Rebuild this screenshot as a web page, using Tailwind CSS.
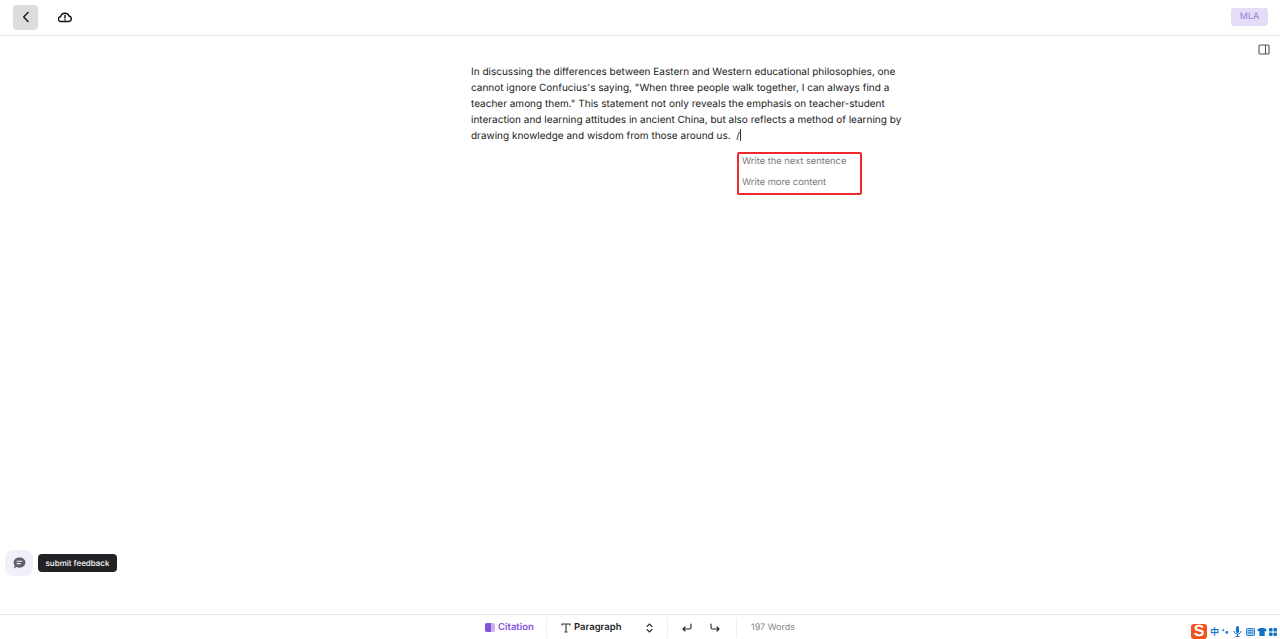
<!DOCTYPE html>
<html lang="en">

<head>
    <meta charset="UTF-8">
    <meta name="viewport" content="width=device-width, initial-scale=1.0">
    <title>Editor</title>
    <script src="https://cdn.jsdelivr.net/npm/@tailwindcss/browser@4"></script>
</head>

<body class="bg-white h-[639px] overflow-hidden font-['Inter',sans-serif] [text-rendering:geometricPrecision]">
    <div class="relative flex flex-col h-[639px]">

        <!-- Header -->
        <header class="h-[36px] shrink-0 border-b border-[#e5e5e5] flex items-center justify-between pl-[13px] pr-[12px] pb-[1px]">
            <div class="flex items-center gap-[20px]">
                <button class="w-[25px] h-[25px] rounded bg-[#dcdcdc] flex items-center justify-center">
                    <svg width="14" height="14" viewBox="0 0 14 14" fill="none" stroke="#222" stroke-width="1.6" stroke-linecap="round" stroke-linejoin="round"><path d="M9 2.500 4.700 7 9 11.500"/></svg>
                </button>
                <svg width="14" height="12" viewBox="0 0 14 12" fill="none" stroke="#111" stroke-width="1.400" stroke-linejoin="round" stroke-linecap="round"><path d="M3.600 10.500H3A2.400 2.400 0 0 1 2.600 5.700 4.400 4.400 0 0 1 11 5 2.800 2.800 0 0 1 11 10.500Z"/><path d="M7 4.200V7M7 8.800v.2"/></svg>
            </div>
            <span class="w-[37px] h-[18px] rounded-[3px] bg-[#e6dcf8] text-[#9a78dc] text-[9px] flex items-center justify-center">MLA</span>
        </header>

        <!-- Document -->
        <main class="relative flex-1 flex flex-col">
            <div class="flex justify-end pr-[10px] pt-[8px] h-[28px]">
                <svg width="12" height="11" viewBox="0 0 12 11" fill="none" stroke="#555" stroke-width="1.100"><rect x="1" y="1" width="10" height="9" rx="1"/><path d="M7.500 1v9"/></svg>
            </div>
            <div class="w-[436px] ml-[471px] mt-0 text-[10px] leading-[16.100px] text-[#1a1a1a]">
                <p>In discussing the differences between Eastern and Western educational philosophies, one cannot ignore Confucius's saying, "When three people walk together, I can always find a teacher among them." This statement not only reveals the emphasis on teacher-student interaction and learning attitudes in ancient China, but also reflects a method of learning by drawing knowledge and wisdom from those around us. &nbsp;/<span class="inline-block w-px h-[12px] bg-[#333] align-[-2px]"></span></p>
            </div>

            <!-- Slash menu -->
            <div class="absolute left-[737px] top-[116px] w-[125px] h-[43px] border-2 border-[#f02a2a] rounded-[2px] flex flex-col gap-[6px] pl-[3px] text-[9.300px] text-[#77777c]">
                <span class="leading-[15px]">Write the next sentence</span>
                <span class="leading-[15px]">Write more content</span>
            </div>

            <!-- Feedback -->
            <div class="absolute left-[5px] top-[514px] flex items-center gap-[5px]">
                <div class="w-[28px] h-[26px] rounded-lg bg-[#eff0fa] flex items-center justify-center">
                    <svg width="13" height="12" viewBox="0 0 13 12"><path fill="#5f6066" d="M6.500.5C3.200.5.600 2.700.600 5.500c0 1.100.4 2.100 1 2.900L1 11.200l2.600-1.100c.9.4 1.900.6 2.900.6 3.300 0 5.900-2.300 5.900-5.200S9.800.5 6.500.5Z"/><path stroke="#eff0fa" stroke-width="1.100" stroke-linecap="round" d="M4 4.300h5M4 6.600h3.300"/></svg>
                </div>
                <div class="h-[18px] w-[79px] justify-center rounded-[4px] bg-[#222226] text-white text-[8px] font-medium flex items-center">submit feedback</div>
            </div>
        </main>

        <!-- Footer toolbar -->
        <footer class="h-[25px] shrink-0 border-t border-[#e5e5e5] flex items-center pl-[485px] pt-[1px] text-[9.500px]">
            <div class="flex items-center gap-[3px] w-[61px] text-[#8352de] font-semibold">
                <svg width="10" height="9" viewBox="0 0 10 9"><rect width="10" height="9" rx="2" fill="#c9b2f2"/><path d="M0 2A2 2 0 0 1 2 0H6v9H2A2 2 0 0 1 0 7Z" fill="#8352de"/></svg>
                <span class="pt-[1px]">Citation</span>
            </div>
            <div class="w-px h-[20px] bg-[#eeeeee]"></div>
            <div class="flex items-center w-[120px] pl-[14px] text-[#1c1c1c] font-semibold">
                <svg width="10" height="10" viewBox="0 0 10 10" fill="none" stroke="#333" stroke-width="1.100"><path d="M1 2.400V1h8v1.400M5 1v8M3.500 9h3"/></svg>
                <span class="ml-[3px] w-[72px] pt-[1px]">Paragraph</span>
                <svg width="7" height="10" viewBox="0 0 7 10" fill="none" stroke="#333" stroke-width="1.100" stroke-linecap="round" stroke-linejoin="round"><path d="M1 3.500 3.500 1 6 3.500M1 6.500 3.500 9 6 6.500"/></svg>
            </div>
            <div class="w-px h-[20px] bg-[#eeeeee]"></div>
            <div class="flex items-center gap-[18px] pl-[14px] w-[68px]">
                <svg width="10" height="9" viewBox="0 0 10 9" fill="none" stroke="#222" stroke-width="1.100" stroke-linecap="round" stroke-linejoin="round"><path d="M9 1v3.500a1.500 1.500 0 0 1-1.500 1.500H1M3 4 1 6l2 2"/></svg>
                <svg width="10" height="9" viewBox="0 0 10 9" fill="none" stroke="#222" stroke-width="1.100" stroke-linecap="round" stroke-linejoin="round"><path d="M1 1v3.500A1.500 1.500 0 0 0 2.500 6H9M7 4l2 2-2 2"/></svg>
            </div>
            <div class="w-px h-[20px] bg-[#eeeeee]"></div>
            <span class="ml-[14px] text-[9px] text-[#85858a]">197 Words</span>
        </footer>

        <!-- IME bar -->
        <div class="absolute left-[1191px] top-[624px] flex items-center gap-0 bg-white h-[15px]">
            <div class="w-[16px] h-[15px] rounded-[3px] bg-[#f1531f] text-white text-[16px] font-bold leading-[15px] text-center font-['Liberation_Sans',sans-serif]">S</div>
            <span class="w-[11px] ml-[2px] text-[9px] font-bold text-[#1272c8] text-center font-['Noto_Sans_CJK_SC',sans-serif]">中</span>
            <svg class="ml-[2px]" width="7" height="7" viewBox="0 0 8 7"><circle cx="1.500" cy="2" r="1.200" fill="#1272c8"/><circle cx="5.500" cy="4.500" r="1.500" fill="#1272c8"/></svg>
            <svg class="ml-[4px]" width="9" height="11" viewBox="0 0 9 11" fill="none"><rect x="3" y="0" width="3" height="7" rx="1.500" fill="#1272c8"/><path d="M1 5c0 2 1.500 3 3.500 3S8 7 8 5M4.500 8v2M2.500 10.500h4" stroke="#1272c8"/></svg>
            <svg class="ml-[4px]" width="9" height="8" viewBox="0 0 10 9"><rect x=".5" y=".5" width="9" height="8" rx="1" fill="#a9d0f0" stroke="#1272c8"/><path d="M2 3h6M2 5.500h6" stroke="#1272c8"/></svg>
            <svg class="ml-[2px]" width="10" height="8" viewBox="0 0 11 9"><path fill="#1272c8" d="M3 0h5l3 2-1.500 2L8.500 3.500V9h-6V3.500L1.500 4 0 2Z"/></svg>
            <svg class="ml-[2px]" width="8" height="8" viewBox="0 0 9 9" fill="#1272c8"><rect width="4" height="4" rx="1"/><rect x="5" width="4" height="4" rx="1"/><rect y="5" width="4" height="4" rx="1"/><rect x="5" y="5" width="4" height="4" rx="1"/></svg>
        </div>
    </div>
</body>

</html>
